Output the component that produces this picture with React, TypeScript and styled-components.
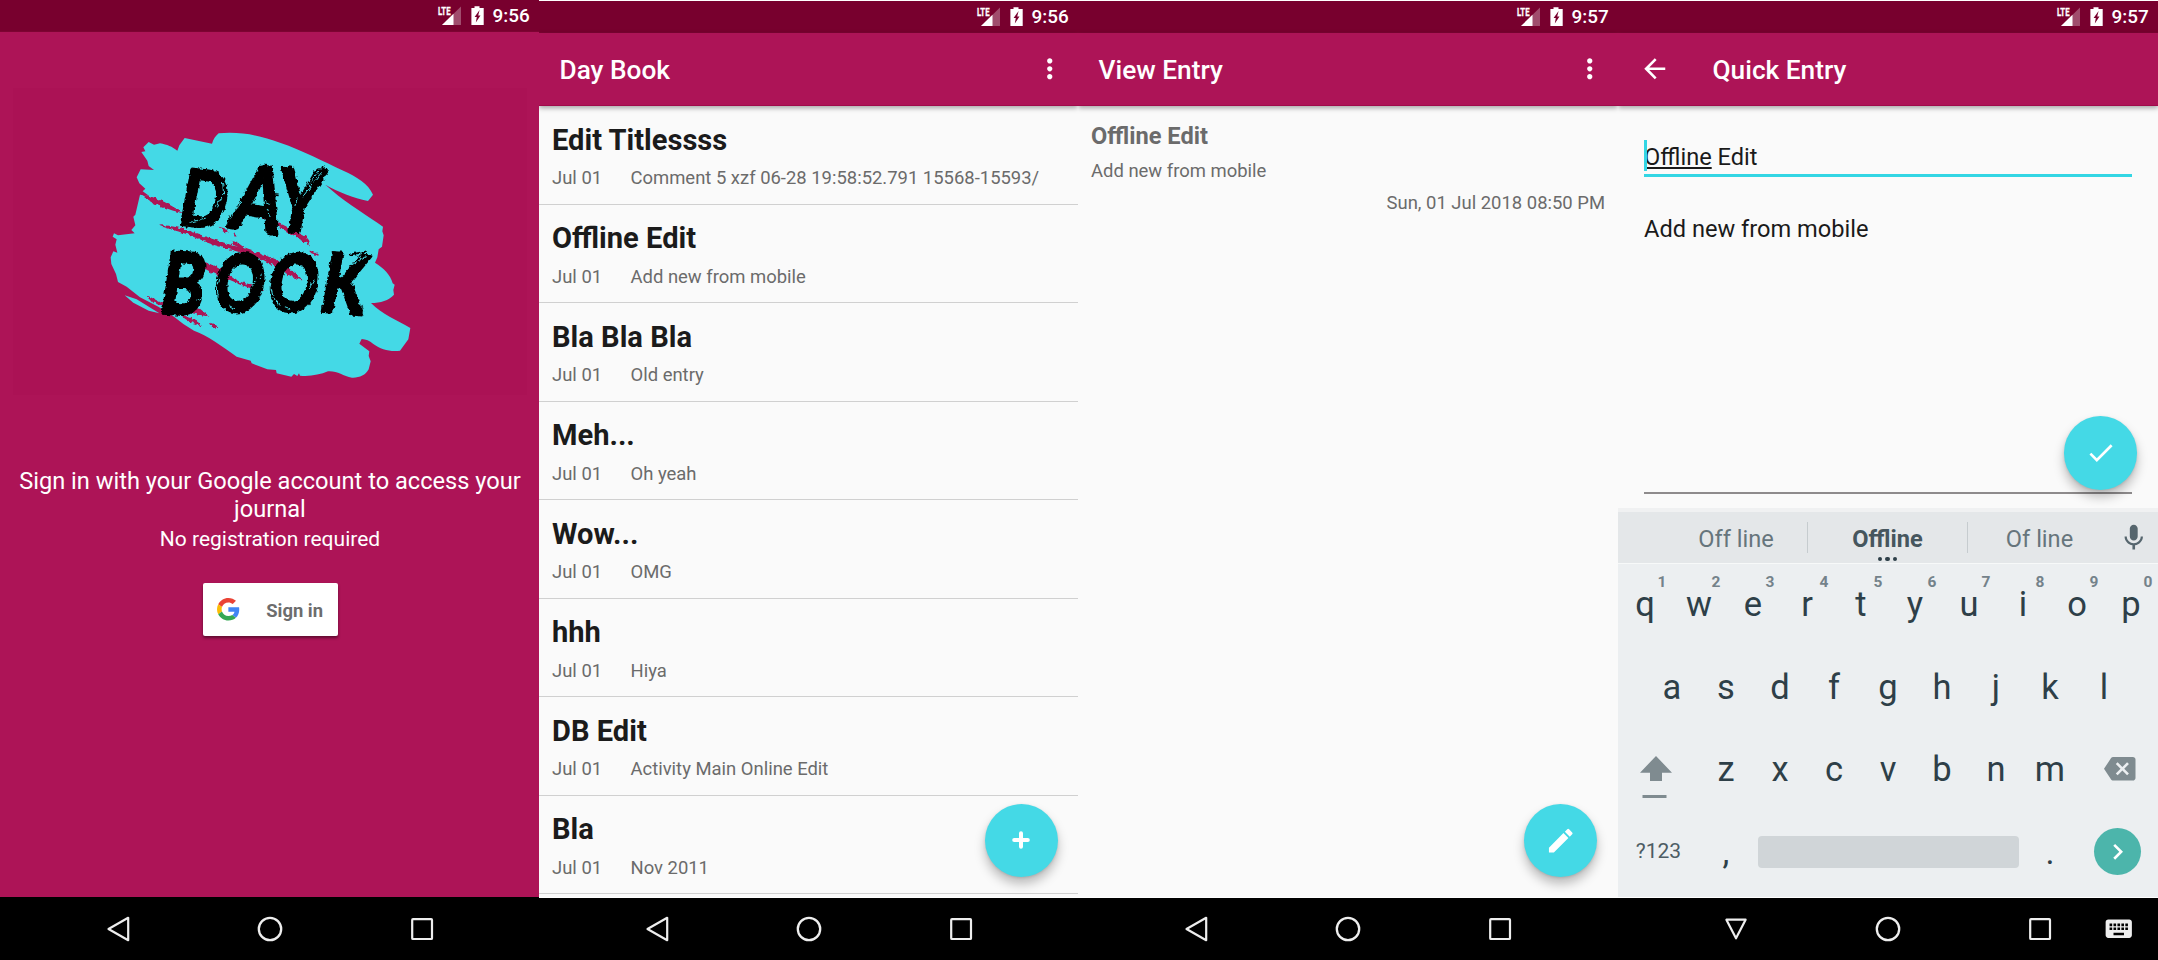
import React from "react";
import styled, { createGlobalStyle } from "styled-components";
import {
  MdArrowBack,
  MdBackspace,
  MdCheck,
  MdChevronRight,
  MdEdit,
  MdKeyboard,
  MdMic,
  MdMoreVert,
} from "react-icons/md";

const color = {
  primary: "#ad1457",
  primaryDark: "#78002e",
  accent: "#44d9e6",
  surface: "#fafafa",
  textDark: "#1b1b1b",
  textGrey: "#6b6b6b",
  key: "#2e3f48",
  keyboard: "#eceff1",
};

const GlobalStyle = createGlobalStyle`
  * { box-sizing: border-box; }
  body { margin: 0; background: #fff; font-family: Roboto, "Liberation Sans", sans-serif; }
  svg { display: block; }
`;

const Board = styled.main`
  display: grid;
  grid-template-columns: 539px 539px 540px 540px;
  width: 2158px;
  height: 960px;
  overflow: hidden;
`;

const Phone = styled.section<{ $flush?: boolean }>`
  position: relative;
  display: flex;
  flex-direction: column;
  height: 960px;
  min-width: 0;
  overflow: hidden;
  padding-top: ${(p) => (p.$flush ? 0 : 1)}px;
  background: #fff;
`;

const StatusBarRow = styled.header`
  display: flex;
  justify-content: flex-end;
  align-items: flex-start;
  flex: none;
  height: 32px;
  padding: 6px 9.5px 0 0;
  background: ${color.primaryDark};
  border-bottom: 1px solid #7d0432;
  color: #fff;
`;

const Clock = styled.span`
  margin: -1px 0 0 8px;
  width: 37px;
  font-size: 18.9px;
  font-weight: 500;
  line-height: 21px;
  white-space: nowrap;
`;

const AppBar = styled.div`
  display: flex;
  align-items: center;
  flex: none;
  z-index: 1;
  height: 73px;
  padding: 0 12.5px 0 20.5px;
  background: ${color.primary};
  border-bottom: 1px solid #a00b4b;
  box-shadow: 0 2px 5px rgba(0, 0, 0, 0.35);
  color: #fff;
`;

const AppTitle = styled.h1<{ $inset?: boolean }>`
  flex: 1;
  margin: 1px 0 0 ${(p) => (p.$inset ? 42.5 : 0)}px;
  font-size: 26.25px;
  font-weight: 500;
  line-height: 32px;
`;

const NavBarRow = styled.nav<{ $height: number }>`
  display: grid;
  grid-template-columns: 63px 110px 194px 110px 63px;
  justify-items: center;
  align-items: center;
  flex: none;
  height: ${(p) => p.$height}px;
  background: #000;
  color: #eee;
`;

const KeyboardSwitch = styled.span`
  margin-right: 15px;
`;

const Body = styled.div`
  flex: 1;
  min-height: 0;
  overflow: hidden;
  background: ${color.surface};
  border-bottom: 1px solid #fff;
`;

/* sign-in screen */
const Welcome = styled.div`
  flex: 1;
  display: flex;
  flex-direction: column;
  align-items: center;
  width: 540px;
  padding-top: 56px;
  background: ${color.primary};
  color: #fff;
  text-align: center;
`;

const LogoFrame = styled.div`
  width: 514px;
  height: 307px;
  margin-bottom: 73px;
  padding: 32px 0 0 77px;
  background: #ab1255;
`;

const Lead = styled.p`
  width: 514px;
  margin: 0 0 4px;
  font-size: 23.625px;
  line-height: 27.7px;
`;

const Note = styled.p`
  margin: 0 0 31px;
  font-size: 21px;
  line-height: 24.6px;
`;

const SignInButton = styled.button`
  display: flex;
  align-items: center;
  gap: 26.5px;
  width: 135px;
  height: 53px;
  padding: 0 14.5px;
  border: 0;
  border-radius: 2px;
  background: #fff;
  box-shadow: 0 2px 3px rgba(0, 0, 0, 0.45);
  color: #6d6d6d;
  font: 700 18.4px/24px Roboto, sans-serif;
  white-space: nowrap;
  span { margin-top: 3px; }
`;

/* entry list */
const EntryRow = styled.article`
  height: 98.5px;
  padding: 17.5px 13px 0;
  border-bottom: 1px solid #d0d0d0;
`;

const EntryTitle = styled.h2`
  margin: 0 0 11.5px;
  color: ${color.textDark};
  font-size: 29.1px;
  font-weight: 700;
  line-height: 32px;
`;

const EntryMeta = styled.div`
  display: grid;
  grid-template-columns: 78.5px 1fr;
  color: ${color.textGrey};
  font-size: 18.45px;
  line-height: 22px;
  white-space: nowrap;
`;

const Fab = styled.button<{ $top: number; $right: number }>`
  position: absolute;
  top: ${(p) => p.$top}px;
  right: ${(p) => p.$right}px;
  display: flex;
  align-items: center;
  justify-content: center;
  width: 73.5px;
  height: 73.5px;
  padding: 0;
  border: 0;
  border-radius: 50%;
  background: ${color.accent};
  box-shadow: 0 7px 11px rgba(0, 0, 0, 0.25), 0 1px 3px rgba(0, 0, 0, 0.12);
  color: #fff;
`;

/* view entry */
const Detail = styled.article`
  display: flex;
  flex-direction: column;
  padding: 15.5px 13px 0;
  color: ${color.textGrey};
  font-size: 18.45px;
  line-height: 22px;
`;

const DetailTitle = styled.h2`
  margin: 0 0 10.5px;
  font-size: 23.625px;
  font-weight: 700;
  line-height: 28px;
`;

const DetailText = styled.p`
  margin: 0 0 10px;
`;

const DetailDate = styled.time`
  align-self: flex-end;
`;

/* quick entry */
const Form = styled.div`
  display: flex;
  flex-direction: column;
  height: 402px;
  padding: 34px 26px 0;
  color: #1a1a1a;
  font-size: 23.625px;
  line-height: 31px;
`;

const TitleField = styled.div`
  position: relative;
  height: 37px;
  padding-top: 1.5px;
  border-bottom: 3px solid #33d6e4;
`;

const Caret = styled.i`
  position: absolute;
  top: 0;
  left: 0;
  width: 2.5px;
  height: 31px;
  background: #33d6e4;
`;

const Marked = styled.span`
  text-decoration: underline;
  text-decoration-thickness: 1.5px;
  text-underline-offset: 2px;
  text-decoration-skip-ink: none;
`;

const TextField = styled.div`
  height: 317px;
  padding-top: 37px;
  border-bottom: 2px solid #8e8b8c;
`;

const Keyboard = styled.div`
  height: 390px;
  border-top: 4px solid #f0f1f2;
  background: ${color.keyboard};
  color: ${color.key};
`;

const Suggestions = styled.div`
  display: grid;
  grid-template-columns: 47px 142px 161px 143px 46px;
  align-items: center;
  height: 52px;
  background: #e4e7e9;
  border-bottom: 1px solid #f7f9f9;
  color: #66757c;
  font-size: 23.6px;
  text-align: center;
  > svg { margin-left: 7px; }
`;

const Suggestion = styled.span<{ $main?: boolean }>`
  position: relative;
  height: 31px;
  padding-top: 2px;
  line-height: 31px;
  ${(p) =>
    p.$main &&
    "border-left: 1px solid #c6cccf; border-right: 1px solid #c6cccf; font-weight: 700; color: #46565e;"}
`;

const MoreDots = styled.span`
  position: absolute;
  left: 70px;
  bottom: -8px;
  display: flex;
  gap: 3.2px;
  i { width: 4.2px; height: 4.2px; border-radius: 50%; background: ${color.key}; }
`;

const KeyRow = styled.div<{ $cols: string; $inset?: number }>`
  display: grid;
  grid-template-columns: ${(p) => p.$cols};
  height: 82.5px;
  padding: 0 ${(p) => p.$inset ?? 0}px;
`;

const Key = styled.button`
  position: relative;
  display: flex;
  align-items: flex-start;
  justify-content: center;
  padding: 20px 0 0;
  border: 0;
  background: none;
  color: inherit;
  font: 400 34.5px/40px Roboto, sans-serif;
`;

const Hint = styled.sup`
  position: absolute;
  top: 9px;
  left: 34px;
  width: 20px;
  font-size: 15.5px;
  font-weight: 700;
  line-height: 18px;
  color: #74828a;
`;

const SymbolKey = styled(Key)`
  padding-top: 27.5px;
  font-size: 21px;
  line-height: 24px;
  color: #4d5c64;
`;

const PunctKey = styled(Key)`
  padding-top: 20px;
`;

const SpaceBar = styled.div`
  height: 32px;
  margin: 24px 4.5px 0 4.5px;
  border-radius: 4px;
  background: #d0d5d8;
`;

const EnterKey = styled.button`
  display: flex;
  align-items: center;
  justify-content: center;
  width: 47.5px;
  height: 47.5px;
  margin: 16px 0 0 16.5px;
  padding: 0;
  border: 0;
  border-radius: 50%;
  background: #4cb5ab;
  color: #fff;
`;

const ControlKey = styled.div<{ $top: number; $left: number }>`
  padding: ${(p) => p.$top}px 0 0 ${(p) => p.$left}px;
  color: #7f8b90;
`;

function StatusBar({ time }: { time: string }) {
  return (
    <StatusBarRow>
      <svg width="48" height="20" viewBox="0 0 48 20">
        <text x="1" y="8.8" fontSize="11" fontWeight="700" fill="#fff" stroke="#fff" strokeWidth=".3" textLength="12.5" lengthAdjust="spacingAndGlyphs">
          LTE
        </text>
        <path d="M24 0.5V19H5z" fill="#fff" opacity=".3" />
        <path d="M16.5 7.8V19H5z" fill="#fff" />
        <path
          fillRule="evenodd"
          fill="#fff"
          d="M37.5 .2h5v1.8h4.2V19H34.4V2h3.1zM42.6 4l-5 7h2.2l-1 5.6 4.7-7.2h-2.3z"
        />
      </svg>
      <Clock>{time}</Clock>
    </StatusBarRow>
  );
}

function NavBar({ keyboard, height = 62 }: { keyboard?: boolean; height?: number }) {
  return (
    <NavBarRow $height={height}>
      <span />
      <svg width="28" height="28" viewBox="0 0 28 28" fill="none" stroke="currentColor" strokeWidth="2.2" strokeLinejoin="round">
        {keyboard ? <path d="M4.4 4.7h19.2L14 23.3z" /> : <path d="M24.2 2.8v22.4L4.5 14z" />}
      </svg>
      <svg width="28" height="28" viewBox="0 0 28 28" fill="none" stroke="currentColor" strokeWidth="2.3">
        <circle cx="14" cy="14" r="11.2" />
      </svg>
      <svg width="28" height="28" viewBox="0 0 28 28" fill="none" stroke="currentColor" strokeWidth="2.2" strokeLinejoin="round">
        <rect x="4.2" y="4.2" width="19.8" height="19.8" rx=".8" />
      </svg>
      {keyboard && (
        <KeyboardSwitch>
          <MdKeyboard size={31.5} />
        </KeyboardSwitch>
      )}
    </NavBarRow>
  );
}

function Logo() {
  return (
    <svg width="340" height="270" viewBox="0 0 1020 810">
      <defs>
        <filter id="bristle" x="-5%" y="-10%" width="110%" height="120%">
          <feTurbulence type="fractalNoise" baseFrequency="0.09" numOctaves="2" seed="4" />
          <feDisplacementMap in="SourceGraphic" scale="13" xChannelSelector="R" yChannelSelector="G" />
        </filter>
      </defs>
      <path
        fill={color.accent}
        d="M386 40C450 34 510 46 570 68C640 92 700 124 760 152C800 170 836 192 849 224L834 243C790 234 745 216 706 194C756 240 815 276 862 308L879 320L877 334L881 346L876 380L866 388L862 412L855 428C880 444 902 464 908 490L914 494L910 510L912 524C896 542 872 548 843 549C876 582 920 600 961 624L955 658L930 692C900 696 872 688 850 672C838 662 828 658 815 657L808 671L838 694L836 708L842 724L836 748C826 766 808 774 786 773C758 768 742 752 714 754C690 764 660 770 630 767L627 760L622 768L612 762L604 770L560 760L558 750L532 748L485 730L482 722L440 710C400 682 350 644 312 632L280 612L252 590L205 560L150 532L110 500L84 486L78 462L64 432L62 412L70 394L82 398L76 374L80 358L68 350L72 340L84 346L134 340L124 330L136 316L130 290L136 284L150 224L178 228L158 214L166 206L148 190L140 172L152 148L192 150L176 138L172 122L154 96L166 94L160 82L176 66L192 74L210 70C232 74 246 80 262 92L268 76L284 54L366 71C370 58 376 48 386 40Z"
      />
      <path fill={color.accent} d="M104 526L140 538L208 580L176 572L130 548Z" />
      <g fill="#ab1255" filter="url(#bristle)">
        <path d="M152 224C190 226 236 250 282 280C236 270 190 252 152 224Z" />
        <path d="M207 316C260 312 330 346 390 364C450 386 540 400 590 440C610 456 626 466 640 482C600 474 560 440 520 420C460 394 380 384 318 354C280 336 240 330 207 316Z" />
        <path d="M462 270C530 284 600 326 640 346C656 354 662 366 658 376C610 344 536 300 462 270Z" />
        <path d="M386 320L408 326L416 338L398 334ZM430 340L442 348L434 350ZM422 362L440 366L462 382L486 390L480 396L450 384L430 374ZM655 390L676 398L688 408L664 400Z" />
        <path d="M290 420C350 414 400 452 440 482C470 490 500 500 530 512C480 512 430 482 390 468C350 454 326 430 290 420Z" />
        <path d="M170 526L210 546L230 560L190 548ZM270 560L330 566L358 590L328 584L290 576ZM258 578L310 596L342 620L300 606ZM360 608L378 614L384 626L366 620Z" />
      </g>
      <g fill="#000" stroke="#000" strokeLinejoin="bevel" strokeWidth="8" fontFamily="Lato, sans-serif" fontWeight="900" filter="url(#bristle)">
        <text transform="translate(0 318) skewX(-7) scale(.8 1)" x="323 516 684" y="-5 4 12" rotate="5 7 3">
          <tspan fontSize="232">D</tspan>
          <tspan fontSize="270">A</tspan>
          <tspan fontSize="260">Y</tspan>
        </text>
        <text transform="translate(0 580) skewX(-7) scale(.78 1)" x="260 464 672 875" y="0 -9 -9 -6" rotate="2 2 2 4">
          <tspan fontSize="255">B</tspan>
          <tspan fontSize="238">OO</tspan>
          <tspan fontSize="246">K</tspan>
        </text>
        <path
          fill="none"
          strokeWidth="5"
          d="M290 300v24M418 290l-4 22M520 222l46 4M522 234l34-4M462 266l40-8M536 320l6 26M578 146l10 20M696 142l14 12M224 556l-4 28M234 560v26M794 560l6 26M814 552l6 24M780 404l50-10M800 420l44-16"
        />
      </g>
      <g stroke={color.accent} strokeWidth="3" fill="none" strokeLinecap="round" filter="url(#bristle)">
        <path d="M289 170L279 255M398 190l3 34M392 232l-12 26M300 307l46-12M463 200l-14 36M452 246l-8 18M524 244l14 6M532 268l8 22M694 158L640 228M686 154L652 196M622 234l-8 26" />
        <path d="M338 532l26-20M320 540l30-12M382 500l2 32M388 478l-3 14M500 470l-12 28M514 460l-3 16M416 556l18 10M542 500l6 26M552 536l18 20M672 480l-14 24M584 560l16 6M720 416l-8 44M830 408L776 440M812 410L770 434" />
      </g>
    </svg>
  );
}

function GoogleMark() {
  return (
    <svg width="24.5" height="24.5" viewBox="0 0 48 48">
      <path fill="#EA4335" d="M24 9.5c3.54 0 6.71 1.22 9.21 3.6l6.85-6.85C35.9 2.38 30.47 0 24 0 14.62 0 6.51 5.38 2.56 13.22l7.98 6.19C12.43 13.72 17.74 9.5 24 9.5z" />
      <path fill="#4285F4" d="M46.98 24.55c0-1.57-.15-3.09-.38-4.55H24v9.02h12.94c-.58 2.96-2.26 5.48-4.78 7.18l7.73 6c4.51-4.18 7.09-10.36 7.09-17.65z" />
      <path fill="#FBBC05" d="M10.53 28.59c-.48-1.45-.76-2.99-.76-4.59s.27-3.14.76-4.59l-7.98-6.19C.92 16.46 0 20.12 0 24c0 3.88.92 7.54 2.56 10.78l7.97-6.19z" />
      <path fill="#34A853" d="M24 48c6.48 0 11.93-2.13 15.89-5.81l-7.73-6c-2.15 1.45-4.92 2.3-8.16 2.3-6.26 0-11.57-4.22-13.47-9.91l-7.98 6.19C6.51 42.62 14.62 48 24 48z" />
    </svg>
  );
}

const entries = [
  ["Edit Titlessss", "Comment 5 xzf 06-28 19:58:52.791 15568-15593/"],
  ["Offline Edit", "Add new from mobile"],
  ["Bla Bla Bla", "Old entry"],
  ["Meh...", "Oh yeah"],
  ["Wow...", "OMG"],
  ["hhh", "Hiya"],
  ["DB Edit", "Activity Main Online Edit"],
  ["Bla", "Nov 2011"],
];

function SignInScreen() {
  return (
    <Phone $flush>
      <StatusBar time="9:56" />
      <Welcome>
        <LogoFrame>
          <Logo />
        </LogoFrame>
        <Lead>Sign in with your Google account to access your journal</Lead>
        <Note>No registration required</Note>
        <SignInButton>
          <GoogleMark />
          <span>Sign in</span>
        </SignInButton>
      </Welcome>
      <NavBar height={63} />
    </Phone>
  );
}

function ListScreen() {
  return (
    <Phone>
      <StatusBar time="9:56" />
      <AppBar>
        <AppTitle>Day Book</AppTitle>
        <MdMoreVert size={31.5} />
      </AppBar>
      <Body>
        {entries.map(([title, text]) => (
          <EntryRow key={title}>
            <EntryTitle>{title}</EntryTitle>
            <EntryMeta>
              <span>Jul 01</span>
              <span>{text}</span>
            </EntryMeta>
          </EntryRow>
        ))}
      </Body>
      <Fab $top={803.5} $right={20}>
        <svg width="18" height="18" viewBox="0 0 18 18" stroke="#fff" strokeWidth="4" strokeLinecap="round">
          <path d="M9 2.2v13.6M2.2 9h13.6" />
        </svg>
      </Fab>
      <NavBar />
    </Phone>
  );
}

function ViewScreen() {
  return (
    <Phone>
      <StatusBar time="9:57" />
      <AppBar>
        <AppTitle>View Entry</AppTitle>
        <MdMoreVert size={31.5} />
      </AppBar>
      <Body>
        <Detail>
          <DetailTitle>Offline Edit</DetailTitle>
          <DetailText>Add new from mobile</DetailText>
          <DetailDate>Sun, 01 Jul 2018 08:50 PM</DetailDate>
        </Detail>
      </Body>
      <Fab $top={803.5} $right={21}>
        <MdEdit size={31.5} />
      </Fab>
      <NavBar />
    </Phone>
  );
}

function QuickEntryScreen() {
  return (
    <Phone>
      <StatusBar time="9:57" />
      <AppBar>
        <MdArrowBack size={31.5} />
        <AppTitle $inset>Quick Entry</AppTitle>
      </AppBar>
      <Body>
        <Form>
          <TitleField>
            <Caret />
            <Marked>Offline</Marked> Edit
          </TitleField>
          <TextField>Add new from mobile</TextField>
        </Form>
        <Keyboard>
          <Suggestions>
            <span />
            <Suggestion>Off line</Suggestion>
            <Suggestion $main>
              Offline
              <MoreDots>
                <i />
                <i />
                <i />
              </MoreDots>
            </Suggestion>
            <Suggestion>Of line</Suggestion>
            <MdMic size={31.5} color="#56666e" />
          </Suggestions>
          <KeyRow $cols="repeat(10, 54px)">
            {"qwertyuiop".split("").map((k, i) => (
              <Key key={k}>
                {k}
                <Hint>{(i + 1) % 10}</Hint>
              </Key>
            ))}
          </KeyRow>
          <KeyRow $cols="repeat(9, 54px)" $inset={27}>
            {"asdfghjkl".split("").map((k) => (
              <Key key={k}>{k}</Key>
            ))}
          </KeyRow>
          <KeyRow $cols="81px repeat(7, 54px) 81px">
            <ControlKey $top={27} $left={22}>
              <svg width="32" height="43" viewBox="0 0 32 43" fill="currentColor">
                <path d="M16 0L32 16.7H22V25H10V16.7H0zM2.5 39h24v3h-24z" />
              </svg>
            </ControlKey>
            {"zxcvbnm".split("").map((k) => (
              <Key key={k}>{k}</Key>
            ))}
            <ControlKey $top={23.5} $left={27}>
              <MdBackspace size={31.5} />
            </ControlKey>
          </KeyRow>
          <KeyRow $cols="81px 54px 270px 54px 81px">
            <SymbolKey>?123</SymbolKey>
            <PunctKey>,</PunctKey>
            <SpaceBar />
            <PunctKey>.</PunctKey>
            <EnterKey>
              <MdChevronRight size={31.5} />
            </EnterKey>
          </KeyRow>
        </Keyboard>
      </Body>
      <Fab $top={416} $right={21}>
        <MdCheck size={31.5} />
      </Fab>
      <NavBar keyboard />
    </Phone>
  );
}

export default function App() {
  return (
    <>
      <GlobalStyle />
      <Board>
        <SignInScreen />
        <ListScreen />
        <ViewScreen />
        <QuickEntryScreen />
      </Board>
    </>
  );
}
